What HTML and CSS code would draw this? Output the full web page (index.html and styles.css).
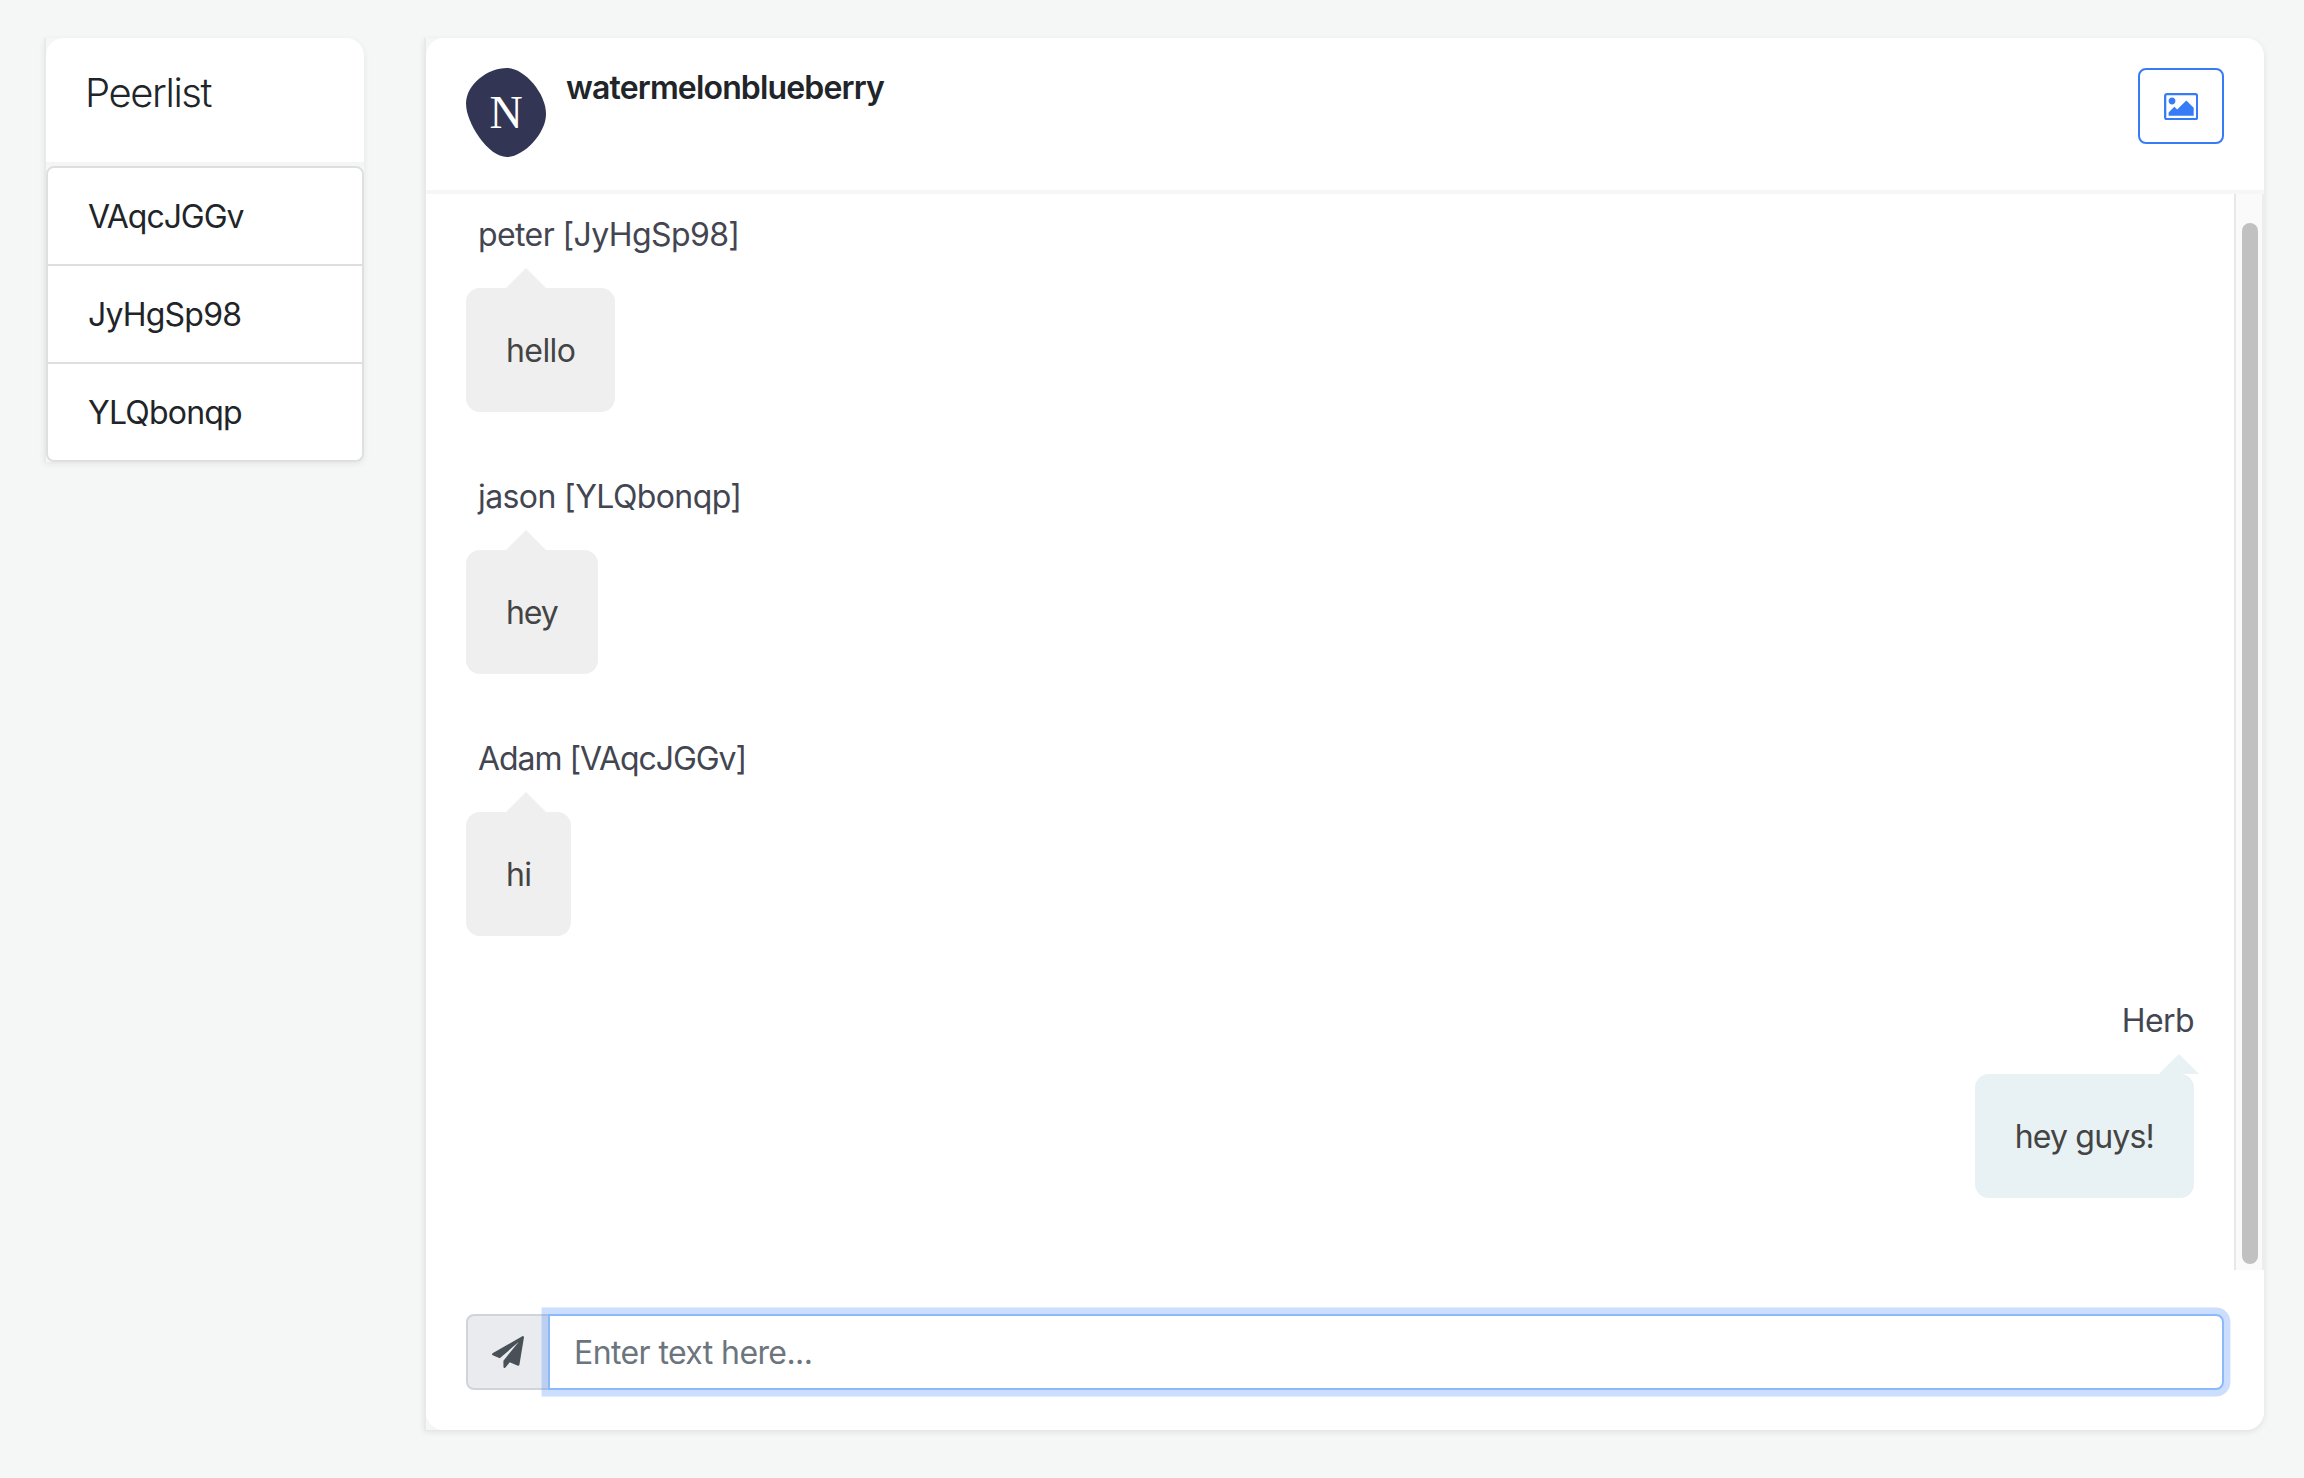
FILE: index.html
```html
<!DOCTYPE html>
<html lang="en">
<head>
<meta charset="utf-8">
<title>Chat</title>
<link rel="stylesheet" href="styles.css">
</head>
<body>
<div class="app">
  <aside class="card peers">
    <header class="peers-head"><h1 class="peers-title">Peerlist</h1></header>
    <ul class="peer-list">
      <li class="peer tighter">VAqcJGGv</li>
      <li class="peer tight">JyHgSp98</li>
      <li class="peer tight">YLQbonqp</li>
    </ul>
  </aside>
  <main class="card chat">
    <header class="chat-head">
      <svg class="avatar" viewBox="0 0 80 90">
        <path fill="#323553" d="M41 0C58 0 80 25 80 46C80 66 57 89 41 89C22 89 0 55 0 35.500C0 16 22 0 41 0Z"/>
        <text x="40" y="60" text-anchor="middle" class="avatar-letter">N</text>
      </svg>
      <h2 class="room">watermelonblueberry</h2>
      <button class="image-btn" type="button" aria-label="Send image">
        <svg class="image-icon" viewBox="0 128 1920 1536"><path fill="currentColor" d="M640 576q0 80-56 136t-136 56-136-56-56-136 56-136 136-56 136 56 56 136zm1024 384v448h-1408v-192l320-320 160 160 512-512zm96-704h-1600q-13 0-22.500 9.500t-9.500 22.500v1216q0 13 9.500 22.500t22.500 9.500h1600q13 0 22.500-9.500t9.500-22.500v-1216q0-13-9.500-22.500t-22.500-9.500zm160 32v1216q0 66-47 113t-113 47h-1600q-66 0-113-47t-47-113v-1216q0-66 47-113t113-47h1600q66 0 113 47t47 113z"/></svg>
      </button>
    </header>
    <div class="history">
      <div class="messages">
        <section class="message">
          <div class="author">peter [JyHgSp98]</div>
          <div class="bubble">hello</div>
        </section>
        <section class="message">
          <div class="author">jason [YLQbonqp]</div>
          <div class="bubble tighter">hey</div>
        </section>
        <section class="message">
          <div class="author tighter">Adam [VAqcJGGv]</div>
          <div class="bubble">hi</div>
        </section>
        <section class="message own">
          <div class="author">Herb</div>
          <div class="bubble tight">hey guys!</div>
        </section>
      </div>
      <div class="scrollbar"><div class="thumb"></div></div>
    </div>
    <form class="composer">
      <div class="send">
        <svg class="send-icon" viewBox="0 0 1792 1792"><path fill="currentColor" d="M1764 11q33 24 27 64l-256 1536q-5 29-32 45-14 8-31 8-11 0-24-5l-453-185-242 295q-18 23-49 23-13 0-22-4-19-7-30.500-23.500t-11.500-36.500v-349l864-1059-1069 925-395-162q-37-14-40-55-2-40 32-59l1664-960q15-9 32-9 20 0 36 11z"/></svg>
      </div>
      <div class="field">Enter text here...</div>
    </form>
  </main>
</div>
</body>
</html>
```
FILE: styles.css
```css
* { box-sizing: border-box; }

body {
  margin: 0;
  background: #f4f7f6;
  color: #212529;
  font: 400 32px/48px Inter, "Liberation Sans", sans-serif;
  letter-spacing: -0.6px;
}

h1, h2, ul { margin: 0; padding: 0; }

.tight { letter-spacing: -0.8px; }
.tighter { letter-spacing: -1.050px; }

.app {
  display: flex;
  align-items: flex-start;
  gap: 60px;
  height: 1478px;
  padding: 38px 40px 48px 44px;
  overflow: hidden;
}

.card { border-left: 2px solid #e8eaea; }

.peers {
  flex: none;
  width: 320px;
  border-radius: 0 18px 8px 0;
  box-shadow: 0 2px 6px rgba(0, 0, 0, 0.07);
}

.peers-head {
  height: 128px;
  padding: 27px 39px;
  border-bottom: 4px solid #f4f5f5;
  border-radius: 18px 18px 0 0;
  background: #fff;
}

.peers-title {
  font-size: 40px;
  font-weight: 300;
  line-height: 56px;
  letter-spacing: -1.400px;
}

.peer-list {
  list-style: none;
  border: 2px solid #dfdfdf;
  border-radius: 8px;
  background: #fff;
}

.peer {
  height: 98px;
  padding: 25px 40px 0;
  border-bottom: 2px solid #dfdfdf;
}

.peer:last-child { height: 96px; border-bottom: 0; }

.chat {
  display: flex;
  flex: 1;
  flex-direction: column;
  height: 1392px;
  border-radius: 0 18px 18px 0;
  box-shadow: 0 2px 6px rgba(0, 0, 0, 0.09);
}

.chat-head {
  display: flex;
  flex: none;
  align-items: flex-start;
  height: 156px;
  padding: 30px 40px 0;
  border-bottom: 4px solid #f4f7f6;
  border-radius: 18px 18px 0 0;
  background: #fff;
}

.avatar { width: 80px; height: 90px; }

.avatar-letter {
  fill: #fff;
  font: 46px "Liberation Serif", serif;
  letter-spacing: 0;
}

.room {
  flex: 1;
  padding: 1px 0 0 20px;
  font-size: 32px;
  font-weight: 600;
  line-height: 38px;
  letter-spacing: -0.840px;
}

.image-btn {
  display: flex;
  align-items: flex-start;
  justify-content: center;
  width: 86px;
  height: 76px;
  padding: 23px 0 0;
  border: 2px solid #357cf6;
  border-radius: 8px;
  background: #fff;
  color: #357cf6;
}

.image-icon { width: 34.300px; height: 27.400px; }

.history {
  display: flex;
  flex: none;
  height: 1076px;
  background: #fff;
}

.messages {
  flex: 1;
  padding: 17px 40px 0;
}

.message {
  display: flex;
  flex-direction: column;
  align-items: flex-start;
  height: 262px;
}

.author {
  height: 77px;
  padding: 0 12px;
  color: #434651;
}

.bubble {
  position: relative;
  height: 124px;
  padding: 39px 40px 0;
  border-radius: 14px;
  background: #efefef;
  color: #444;
}

.bubble::after {
  content: "";
  position: absolute;
  top: -20px;
  left: 40px;
  border: 20px solid transparent;
  border-top: 0;
  border-bottom-color: #efefef;
}

.own { align-items: flex-end; }
.own .author { padding: 0; }
.own .bubble { background: #e8f1f3; }

.own .bubble::after {
  right: -5px;
  left: auto;
  border-bottom-color: #e8f1f3;
}

.scrollbar {
  width: 30px;
  padding: 29px 4px 6px 6px;
  border-right: 2px solid #ededed;
  border-left: 2px solid #e8e8e8;
  background: #fafafa;
}

.thumb {
  width: 16px;
  height: 1041px;
  border-radius: 8px;
  background: #c1c1c1;
}

.composer {
  display: flex;
  flex: 1;
  padding: 44px 40px 40px;
  border-radius: 0 0 18px 18px;
  background: #fff;
}

.send {
  width: 84px;
  height: 76px;
  margin-right: -2px;
  padding: 20px 24px;
  border: 2px solid #ced4da;
  border-radius: 8px 0 0 8px;
  background: #e9ebef;
  color: #495057;
}

.send-icon { display: block; width: 32px; height: 32px; }

.field {
  flex: 1;
  height: 76px;
  padding: 13px 24px 0;
  border: 2px solid #8bb9fa;
  border-radius: 0 8px 8px 0;
  background: #fff;
  box-shadow: 0 0 0 6.400px rgba(53, 124, 246, 0.25);
  color: #6c757d;
}
```
